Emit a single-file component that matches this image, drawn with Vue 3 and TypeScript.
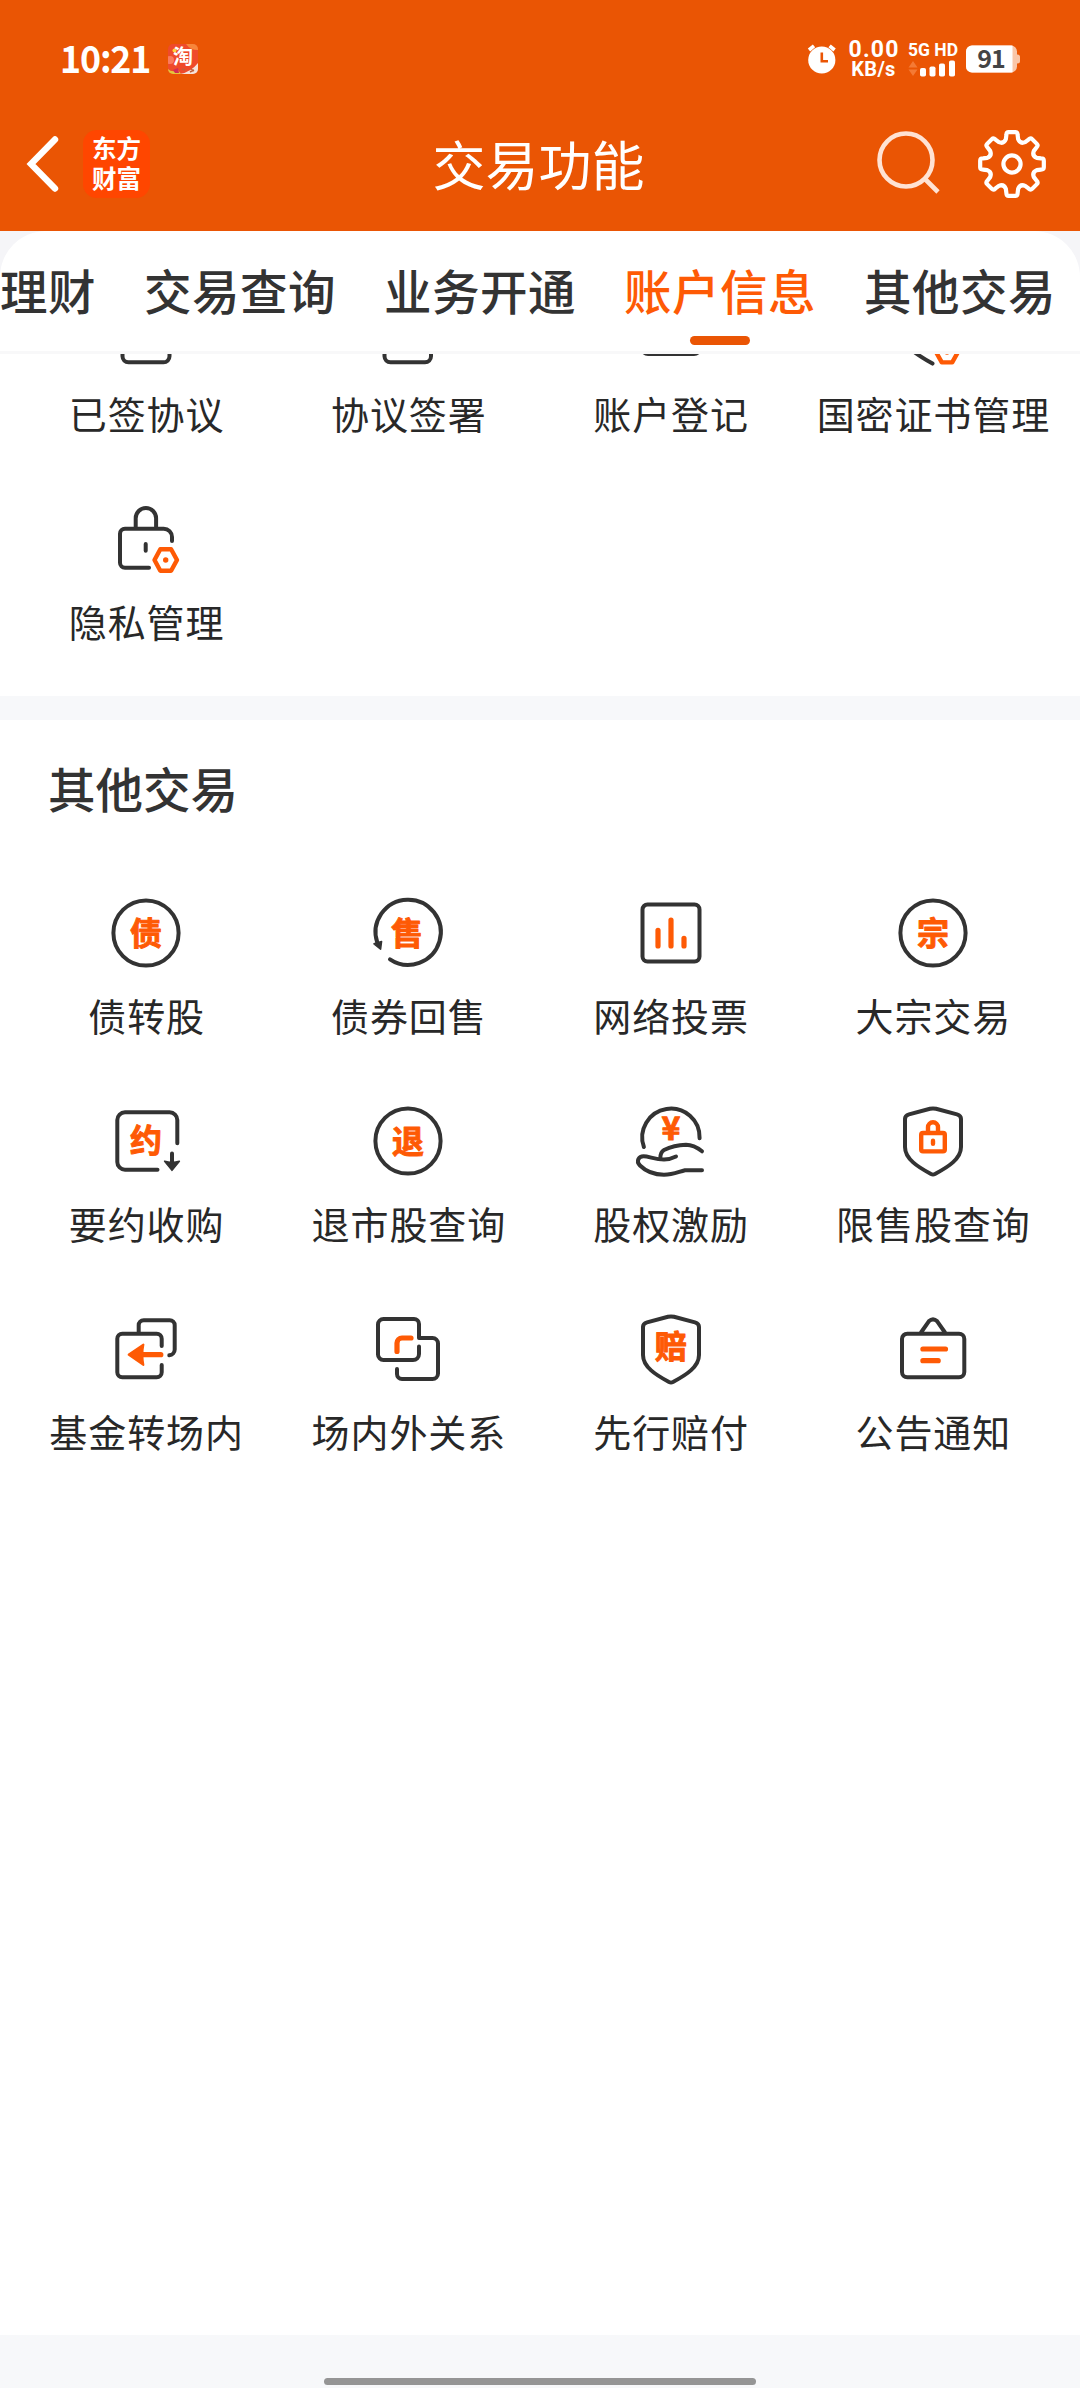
<script setup lang="ts">
type Shape =
  | 'doc' | 'sign' | 'card' | 'cert' | 'privacy'
  | 'circle' | 'cycle' | 'vote' | 'offer' | 'hand' | 'lockShield'
  | 'fund' | 'relation' | 'shield' | 'notice'

interface Entry {
  label: string
  shape: Shape
  glyph?: string
  gx?: number
  gy?: number
}

const tabs = ['理财', '交易查询', '业务开通', '账户信息', '其他交易']
const activeTab = '账户信息'

const accountEntries: Entry[] = [
  { label: '已签协议', shape: 'doc' },
  { label: '协议签署', shape: 'sign' },
  { label: '账户登记', shape: 'card' },
  { label: '国密证书管理', shape: 'cert' },
  { label: '隐私管理', shape: 'privacy' },
]

const otherEntries: Entry[] = [
  { label: '债转股', shape: 'circle', glyph: '债', gx: 40, gy: 39.5 },
  { label: '债券回售', shape: 'cycle', glyph: '售', gx: 39, gy: 39.5 },
  { label: '网络投票', shape: 'vote' },
  { label: '大宗交易', shape: 'circle', glyph: '宗', gx: 40, gy: 39.5 },
  { label: '要约收购', shape: 'offer', glyph: '约', gx: 40, gy: 39 },
  { label: '退市股查询', shape: 'circle', glyph: '退', gx: 40, gy: 40 },
  { label: '股权激励', shape: 'hand', glyph: '¥', gx: 40, gy: 27 },
  { label: '限售股查询', shape: 'lockShield' },
  { label: '基金转场内', shape: 'fund' },
  { label: '场内外关系', shape: 'relation' },
  { label: '先行赔付', shape: 'shield', glyph: '赔', gx: 40, gy: 36.7 },
  { label: '公告通知', shape: 'notice' },
]

const sections = [
  { title: '', entries: accountEntries },
  { title: '其他交易', entries: otherEntries },
]

const shield =
  'M37 7.8Q40 7 43 7.8L64 13.4Q68 14.5 68 18V46C68 58 55 66 42 73Q40 74 38 73C25 66 12 58 12 46V18Q12 14.5 16 13.4Z'

const strokes: Record<Shape, string> = {
  doc: 'M22.5 10H57.5a6 6 0 0 1 6 6V65.3a6 6 0 0 1-6 6H22.5a6 6 0 0 1-6-6V16a6 6 0 0 1 6-6Z',
  sign: 'M22.5 10H57a6 6 0 0 1 6 6V65.3a6 6 0 0 1-6 6H22.5a6 6 0 0 1-6-6V16a6 6 0 0 1 6-6Z',
  card: 'M17 16H63a6 6 0 0 1 6 6V57a6 6 0 0 1-6 6H17a6 6 0 0 1-6-6V22a6 6 0 0 1 6-6Z',
  cert: 'M68 40V18L40 7L12 18V46C12 55 19 61 39.5 72.6',
  privacy: 'M66 42V38a8.3 8.3 0 0 0-8.3-8.3H19a5 5 0 0 0-5 5V63.7a5 5 0 0 0 5 5H43M29.7 29V19.2a10.2 10.2 0 0 1 20.4 0V29M39.7 45V51.8',
  circle: 'M40 7.4a32.6 32.6 0 1 1 0 65.2a32.6 32.6 0 1 1 0-65.2Z',
  cycle: 'M9.4 50A32.6 32.6 0 1 1 22 66.3',
  vote: 'M16.5 11.5H63.5a5 5 0 0 1 5 5V63.5a5 5 0 0 1-5 5H16.5a5 5 0 0 1-5-5V16.5a5 5 0 0 1 5-5Z',
  offer: 'M71.3 42.3V19a7.7 7.7 0 0 0-7.7-7.7H19a7.7 7.7 0 0 0-7.7 7.7V61a7.7 7.7 0 0 0 7.7 7.7H51.5M66 52.5V62',
  hand: 'M12.9 46A28.7 28.7 0 1 1 68.6 37.3M71 69.3H54C47 71 42 73.7 33 73.7C22 73.7 15 70.5 9 64.5C4.5 60 8 55.3 12.5 55.3C18 55.3 24 58.5 33 58.5C38 58.5 42 57 45 55.5M71 50.3C66 46.3 61 43.8 55 43.8C46 44 38 46.5 33 49C29.8 50.8 29.3 53 29.3 57.5',
  lockShield: shield,
  fund: 'M55.7 37V29.7a5 5 0 0 0-5-5H16.3a5 5 0 0 0-5 5V63.3a5 5 0 0 0 5 5H50.7a5 5 0 0 0 5-5V56M32.7 24V16.3a5 5 0 0 1 5-5H63.7a5 5 0 0 1 5 5V40.5a5.8 5.8 0 0 1-5.4 5.8',
  relation: 'M51 37.5V45a6 6 0 0 1-6 6H15.5a5.5 5.5 0 0 1-5.5-5.5V15.5a5.5 5.5 0 0 1 5.5-5.5H46a5 5 0 0 1 5 5V29H64.5a5.5 5.5 0 0 1 5.5 5.5V64.5a5.5 5.5 0 0 1-5.5 5.5H34a5 5 0 0 1-5-5V60',
  shield,
  notice: 'M14 24.7H66a5.3 5.3 0 0 1 5.3 5.3V63a5.3 5.3 0 0 1-5.3 5.3H14.3a5.3 5.3 0 0 1-5.3-5.3V30a5.3 5.3 0 0 1 5.3-5.3ZM28 23.5L35.8 12.3Q40 8.3 44.2 12.3L52 23.5',
}

const accents: Partial<Record<Shape, string>> = {
  cert: 'M43 61L48.8 50.6H59.2L65 61L59.2 71.4H48.8Z',
  privacy: 'M48.5 61L54.3 50.2H65.1L71 61L65.1 71.8H54.3Z',
  vote: 'M27 37.3V53M40 27V53M53 45.3V53',
  lockShield: 'M30 32H50a1.8 1.8 0 0 1 1.8 1.8V48.6a1.8 1.8 0 0 1-1.8 1.8H30a1.8 1.8 0 0 1-1.8-1.8V33.8a1.8 1.8 0 0 1 1.8-1.8ZM35 32V26.3a5 5 0 0 1 10 0V32M40 39.7V42.7',
  fund: 'M36 45.7H54.8',
  relation: 'M43 29H34a5 5 0 0 0-5 5V42.5',
  notice: 'M29.9 40H52.5M29.9 51.7H45.2',
}

const darkFills: Partial<Record<Shape, string>> = {
  cycle: 'M6 50.8L13.6 48.4L12.6 56.2Z',
  offer: 'M58.6 60.2Q66 62.6 73.4 60.2L66 69.4Z',
}

const accentFills: Partial<Record<Shape, string>> = {
  fund: 'M22.6 45.7L37.4 35.6Q35.4 45.7 37.4 56Z',
}

const dots: Partial<Record<Shape, [number, number]>> = {
  cert: [54, 61],
  privacy: [59.7, 61],
}

/* Eight-toothed gear outline, centred on the origin. */
const gear = (() => {
  const pt = (r: number, deg: number) => {
    const a = (deg * Math.PI) / 180
    return `${(r * Math.sin(a)).toFixed(2)} ${(-r * Math.cos(a)).toFixed(2)}`
  }
  let d = ''
  for (let k = 0; k < 8; k++) {
    const a = k * 45
    d += `${k ? 'L' : 'M'}${pt(29.5, a - 11)}Q${pt(32.3, a - 10)} ${pt(32, a - 6)}L${pt(32, a + 6)}Q${pt(32.3, a + 10)} ${pt(29.5, a + 11)}`
    d += `L${pt(25.5, a + 14)}Q${pt(21.5, a + 22.5)} ${pt(25.5, a + 31)}`
  }
  return d + 'Z'
})()
</script>

<template>
  <div class="screen">
    <header class="header">
      <div class="status">
        <div class="status-left">
          <span class="time">10:21</span>
          <svg class="taobao" viewBox="0 0 30 30">
            <defs><clipPath id="tb"><rect width="30" height="30" rx="5" /></clipPath></defs>
            <g clip-path="url(#tb)">
              <rect width="30" height="30" fill="#ef4a2b" />
              <path d="M18 0H30V6Q22 6 18 0Z" fill="#f7863a" />
              <circle cx="2" cy="16" r="4" fill="#fb7a5e" />
              <path d="M30 19V30H12Q23 28 30 19Z" fill="#f6e3da" />
              <path d="M0 25Q4 29 10 26L13 30H0Z" fill="#e4c53c" />
              <path d="M5 26L10 24L11 29H7Z" fill="#d32a55" />
              <path d="M14 25l3 1M23 25l3 2M22 28l4-2" stroke="#c0603c" stroke-width="1.4" />
              <circle cx="6.5" cy="6.5" r="2" fill="#ffd23d" />
            </g>
            <text x="15" y="19.500" text-anchor="middle" font-size="20" font-weight="700" fill="#fff">淘</text>
          </svg>
        </div>
        <div class="status-right">
          <svg class="alarm" viewBox="0 0 30 30">
            <circle cx="14.8" cy="16" r="13.6" fill="#fff" />
            <path d="M2 6L7 1.8M22.6 1.8L27.6 6" stroke="#fff" stroke-width="3.6" />
            <path d="M14.8 8.5V17.2H21" fill="none" stroke="#ea5504" stroke-width="2.6" />
          </svg>
          <div class="speed"><b>0.00</b><i>KB/s</i></div>
          <div class="network">
            <b>5G HD</b>
            <svg viewBox="0 0 48 17">
              <path d="M0.5 7.5L5 1L9.500 7.500ZM.5 9.500H9.500L5 16Z" fill="#f47a35" />
              <rect x="12" y="8" width="6" height="8.500" rx="1.800" fill="#fff" />
              <rect x="21.500" y="6.500" width="6" height="10" rx="1.800" fill="#fff" />
              <rect x="31" y="3.500" width="6" height="13" rx="1.800" fill="#fff" />
              <rect x="41" y="0.500" width="6" height="16" rx="1.800" fill="#fff" />
            </svg>
          </div>
          <svg class="battery" viewBox="0 0 54 28">
            <path d="M6 .5H45a6 6 0 0 1 6 6V21.500a6 6 0 0 1-6 6H6a6 6 0 0 1-6-6V6.500a6 6 0 0 1 6-6Z" fill="#f9c6a8" />
            <path d="M50 9.500h1.500a2.500 2.500 0 0 1 2.500 2.500v4a2.500 2.500 0 0 1-2.500 2.500H50Z" fill="#f9c6a8" />
            <path d="M6 .5H46.500V27.500H6a6 6 0 0 1-6-6V6.500a6 6 0 0 1 6-6Z" fill="#fff" />
            <text x="25" y="23" text-anchor="middle" class="level">91</text>
          </svg>
        </div>
      </div>
      <nav class="nav">
        <div class="nav-left">
          <svg class="back" viewBox="0 0 34 60">
            <path d="M29 5.500L5 30L29 54.500" fill="none" stroke="#fff" stroke-width="6.400" stroke-linecap="round" stroke-linejoin="miter" />
          </svg>
          <div class="logo"><span>东方</span><span>财富</span></div>
        </div>
        <h1>交易功能</h1>
        <div class="nav-right">
          <svg class="search" viewBox="0 0 66 68">
            <circle cx="31" cy="30" r="26.500" />
            <path d="M49.500 48.500L63 62" />
          </svg>
          <svg class="gear" viewBox="-35 -35 70 70">
            <path :d="gear" />
            <circle r="8.600" />
          </svg>
        </div>
      </nav>
    </header>

    <div class="tabs-wrap">
      <div class="tabs">
        <span v-for="tab in tabs" :key="tab" class="tab" :class="{ active: tab === activeTab }">{{ tab }}</span>
      </div>
    </div>

    <main class="content">
      <section v-for="(section, i) in sections" :key="i" class="section" :class="{ scrolled: !section.title }">
        <h2 v-if="section.title">{{ section.title }}</h2>
        <div class="grid">
          <div v-for="entry in section.entries" :key="entry.label" class="entry">
            <svg class="icon" viewBox="0 0 80 80">
              <path class="line" :d="strokes[entry.shape]" />
              <path v-if="darkFills[entry.shape]" class="dark-fill" :d="darkFills[entry.shape]" />
              <path v-if="accents[entry.shape]" class="accent" :class="entry.shape" :d="accents[entry.shape]" />
              <path v-if="accentFills[entry.shape]" class="accent-fill" :d="accentFills[entry.shape]" />
              <circle v-if="dots[entry.shape]" :cx="dots[entry.shape]![0]" :cy="dots[entry.shape]![1]" r="2.700" fill="#fe5a05" />
              <text v-if="entry.glyph" class="glyph" :x="entry.gx" :y="entry.gy! + 12">{{ entry.glyph }}</text>
            </svg>
            <span class="label">{{ entry.label }}</span>
          </div>
        </div>
      </section>
    </main>

    <footer class="home"><div class="home-bar"></div></footer>
  </div>
</template>

<style>
body {
  margin: 0;
  background: #fff;
}
</style>

<style scoped>
.screen {
  width: 1080px;
  height: 2388px;
  display: flex;
  flex-direction: column;
  overflow: hidden;
  background: #fff;
  color: #333;
  font-family: "Noto Sans CJK SC", "Noto Sans", sans-serif;
}
svg {
  display: block;
  flex: none;
  overflow: visible;
}
.header {
  height: 231px;
  flex: none;
  background: #ea5504;
  color: #fff;
}
.status {
  height: 100px;
  box-sizing: border-box;
  padding: 18px 60px 0 60px;
  display: flex;
  align-items: center;
  justify-content: space-between;
}
.status-left,
.status-right {
  display: flex;
  align-items: center;
}
.time {
  width: 108px;
  margin-top: -4px;
  font-size: 38px;
  line-height: 40px;
  font-weight: 700;
  letter-spacing: -1.2px;
  white-space: nowrap;
  transform: scaleX(0.94);
  transform-origin: 0 50%;
}
.taobao {
  width: 30px;
  height: 30px;
}
.alarm {
  width: 30px;
  height: 30px;
  margin-right: 11px;
}
.speed {
  width: 51px;
  display: flex;
  flex-direction: column;
  align-items: center;
  margin-right: 9px;
  white-space: nowrap;
}
.speed b {
  font: 700 23px/20px Roboto, sans-serif;
  letter-spacing: 1.3px;
  margin-right: -1.300px;
}
.speed i {
  font: 700 20px/19px Roboto, sans-serif;
  letter-spacing: 0.3px;
}
.network {
  width: 48px;
  margin-right: 10px;
}
.network b {
  display: block;
  font: 700 17.500px/16px Roboto, sans-serif;
  white-space: nowrap;
}
.network svg {
  width: 48px;
  height: 17px;
  margin-top: 2px;
}
.battery {
  width: 54px;
  height: 28px;
}
.level {
  font-size: 25px;
  font-weight: 700;
  letter-spacing: -1px;
  fill: #444;
}
.nav {
  height: 131px;
  display: grid;
  grid-template-columns: 1fr auto 1fr;
  align-items: center;
}
.nav-left {
  display: flex;
  align-items: center;
  padding-left: 26px;
  margin-top: -4px;
}
.back {
  width: 34px;
  height: 60px;
}
.logo {
  width: 67px;
  height: 66px;
  padding-bottom: 2px;
  margin-left: 23px;
  border-radius: 14px;
  background: #ff4600;
  display: flex;
  flex-direction: column;
  align-items: center;
  justify-content: center;
  font-size: 24.500px;
  line-height: 30px;
  font-weight: 700;
}
h1 {
  margin: -6px 0 0 -3px;
  font-size: 53px;
  line-height: 70px;
  font-weight: 400;
}
.nav-right {
  display: flex;
  align-items: center;
  justify-content: flex-end;
  padding-right: 33px;
  margin-top: -4px;
}
.search {
  width: 66px;
  height: 68px;
  margin-right: 36px;
  fill: none;
  stroke: #ffe2d3;
  stroke-width: 4.600;
}
.gear {
  width: 70px;
  height: 70px;
  fill: none;
  stroke: #fff;
  stroke-width: 4.200;
  stroke-linejoin: round;
}
.tabs-wrap {
  height: 123px;
  box-sizing: border-box;
  flex: none;
  background: #f5f5f8;
  border-bottom: 3px solid #f8f8f9;
}
.tabs {
  height: 120px;
  display: flex;
  gap: 48px;
  background: #fff;
  border-radius: 46px 46px 0 0;
  overflow: hidden;
}
.tab {
  position: relative;
  flex: none;
  height: 120px;
  font-size: 47.500px;
  letter-spacing: 0.5px;
  line-height: 118px;
  font-weight: 500;
}
.tab.active {
  color: #fe5a05;
}
.tab.active::after {
  content: "";
  position: absolute;
  left: 50%;
  bottom: 6px;
  width: 60px;
  height: 9px;
  margin-left: -30px;
  border-radius: 5px;
  background: #ea5504;
}
.content {
  flex: 1;
  min-height: 0;
  overflow: hidden;
}
.section.scrolled {
  margin-top: -85px;
  padding-bottom: 11px;
  border-bottom: 24px solid #f7f8fa;
}
h2 {
  margin: 0;
  padding: 28px 48px 43px;
  font-size: 47.500px;
  line-height: 80px;
  font-weight: 500;
}
.grid {
  display: grid;
  grid-template-columns: repeat(4, 1fr);
  grid-auto-rows: 208px;
  padding: 0 16px 0 15px;
}
.entry {
  display: flex;
  flex-direction: column;
  align-items: center;
  padding-top: 22px;
}
.icon {
  width: 80px;
  height: 80px;
}
.line {
  fill: none;
  stroke: #333;
  stroke-width: 4;
  stroke-linecap: round;
  stroke-linejoin: round;
}
.dark-fill {
  fill: #333;
  stroke: #333;
  stroke-width: 1.500;
  stroke-linejoin: round;
}
.accent {
  fill: none;
  stroke: #fe5a05;
  stroke-width: 5.200;
  stroke-linecap: round;
  stroke-linejoin: round;
}
.accent.lockShield,
.accent.privacy,
.accent.cert {
  stroke-width: 4.400;
}
.accent-fill {
  fill: #fe5a05;
  stroke: #fe5a05;
  stroke-width: 2;
  stroke-linejoin: round;
}
.glyph {
  font-size: 32px;
  font-weight: 700;
  text-anchor: middle;
  fill: #fe5a05;
  stroke: #fe5a05;
  stroke-width: 1;
  stroke-linejoin: round;
}
.label {
  margin-top: 19px;
  font-size: 38px;
  line-height: 46px;
  letter-spacing: 0.9px;
  margin-right: -1px;
  color: #282828;
  white-space: nowrap;
}
.home {
  height: 53px;
  flex: none;
  display: flex;
  align-items: flex-end;
  justify-content: center;
  background: #f7f8fa;
}
.home-bar {
  width: 432px;
  height: 7px;
  margin-bottom: 3px;
  border-radius: 4px;
  background: #959595;
}
</style>
